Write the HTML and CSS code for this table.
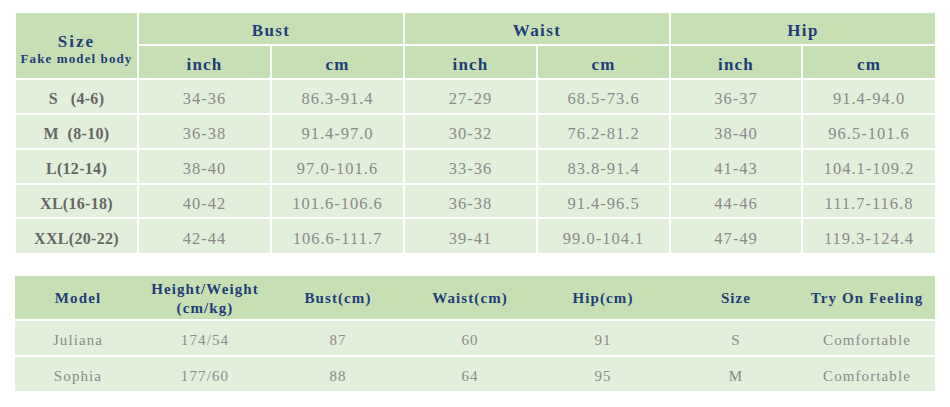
FILE: index.html
```html
<!DOCTYPE html>
<html>
<head>
<meta charset="utf-8">
<link rel="stylesheet" href="styles.css">
</head>
<body>
<div class="page">
  <table class="chart">
    <colgroup>
      <col class="c-size"><col class="c-w"><col class="c-w"><col class="c-w"><col class="c-w"><col class="c-w2"><col class="c-w2">
    </colgroup>
    <thead>
      <tr class="h1">
        <th rowspan="2" class="size-h"><div class="size-t">Size</div><div class="size-s">Fake model body</div></th>
        <th colspan="2" class="grp">Bust</th>
        <th colspan="2" class="grp">Waist</th>
        <th colspan="2" class="grp last">Hip</th>
      </tr>
      <tr class="h2">
        <th class="unit">inch</th><th class="unit">cm</th>
        <th class="unit">inch</th><th class="unit">cm</th>
        <th class="unit">inch</th><th class="unit last">cm</th>
      </tr>
    </thead>
    <tbody>
      <tr class="r35"><td class="sz">S   (4-6)</td><td>34-36</td><td>86.3-91.4</td><td>27-29</td><td>68.5-73.6</td><td>36-37</td><td class="last">91.4-94.0</td></tr>
      <tr class="r35"><td class="sz">M  (8-10)</td><td>36-38</td><td>91.4-97.0</td><td>30-32</td><td>76.2-81.2</td><td>38-40</td><td class="last">96.5-101.6</td></tr>
      <tr class="r35"><td class="sz">L(12-14)</td><td>38-40</td><td>97.0-101.6</td><td>33-36</td><td>83.8-91.4</td><td>41-43</td><td class="last">104.1-109.2</td></tr>
      <tr class="r34"><td class="sz">XL(16-18)</td><td>40-42</td><td>101.6-106.6</td><td>36-38</td><td>91.4-96.5</td><td>44-46</td><td class="last">111.7-116.8</td></tr>
      <tr class="r34 end"><td class="sz">XXL(20-22)</td><td>42-44</td><td>106.6-111.7</td><td>39-41</td><td>99.0-104.1</td><td>47-49</td><td class="last">119.3-124.4</td></tr>
    </tbody>
  </table>

  <table class="models">
    <colgroup>
      <col class="m1"><col class="m2"><col class="m3"><col class="m4"><col class="m5"><col class="m6"><col class="m7">
    </colgroup>
    <thead>
      <tr class="mh">
        <th>Model</th><th>Height/Weight<br>(cm/kg)</th><th>Bust(cm)</th><th>Waist(cm)</th><th>Hip(cm)</th><th>Size</th><th>Try On Feeling</th>
      </tr>
    </thead>
    <tbody>
      <tr class="mr1"><td>Juliana</td><td>174/54</td><td>87</td><td>60</td><td>91</td><td>S</td><td>Comfortable</td></tr>
      <tr class="mr2"><td>Sophia</td><td>177/60</td><td>88</td><td>64</td><td>95</td><td>M</td><td>Comfortable</td></tr>
    </tbody>
  </table>
</div>
</body>
</html>
```

FILE: styles.css
```css
html, body {
  margin: 0;
  padding: 0;
  background: #ffffff;
}

.page {
  padding: 13px 0 0 16px;
  font-family: "Liberation Serif", "DejaVu Serif", serif;
}

table {
  border-collapse: separate;
  border-spacing: 0;
  table-layout: fixed;
}

th, td {
  padding: 0;
  text-align: center;
  vertical-align: middle;
  white-space: pre;
}

/* ---------- size chart ---------- */
.chart {
  width: 919px;
}
.chart .c-size { width: 123px; }
.chart .c-w { width: 133px; }
.chart .c-w2 { width: 132px; }

.chart th {
  background: #c6e0b4;
  color: #1f3d78;
  font-weight: bold;
  border-right: 2px solid #ffffff;
  border-bottom: 2px solid #ffffff;
}
.chart td {
  background: #e2efda;
  color: #8a8a8a;
  font-size: 16.5px;
  letter-spacing: 1px;
  padding-top: 5px;
  border-right: 2px solid #ffffff;
  border-bottom: 2px solid #ffffff;
}
.chart .last { border-right: none; }
.chart .end td { border-bottom: none; }

.chart .h1 { height: 33px; }
.chart .h2 { height: 34px; }
.chart .r35 { height: 35px; }
.chart .r34 { height: 34px; }

.chart .grp {
  font-size: 17px;
  letter-spacing: 1.4px;
  padding-top: 4px;
}
.chart .unit {
  font-size: 17px;
  letter-spacing: 1.2px;
  padding-top: 5px;
}
.chart .size-h {
  padding-top: 7px;
}
.size-t {
  font-size: 17px;
  letter-spacing: 2px;
  line-height: 19px;
}
.size-s {
  font-size: 13px;
  letter-spacing: 1.1px;
  line-height: 16px;
}
.chart td.sz {
  color: #666666;
  font-weight: bold;
  font-size: 16px;
  letter-spacing: 0.3px;
}

/* ---------- model table ---------- */
.models {
  width: 920px;
  margin: 23px 0 0 -1px;
}
.models .m1 { width: 126px; }
.models .m2 { width: 128px; }
.models .m3 { width: 138px; }
.models .m4 { width: 126px; }
.models .m5 { width: 140px; }
.models .m6 { width: 126px; }
.models .m7 { width: 136px; }

.models th {
  background: #c6e0b4;
  color: #1f3d78;
  font-weight: bold;
  font-size: 15px;
  line-height: 19px;
  letter-spacing: 1.1px;
  border-bottom: 2px solid #ffffff;
  padding-top: 2px;
}
.models td {
  background: #e2efda;
  color: #8a8a8a;
  font-size: 15px;
  letter-spacing: 1.1px;
  padding-top: 4px;
}
.models .mh { height: 45px; }
.models .mr1 { height: 36px; }
.models .mr1 td { border-bottom: 2px solid #ffffff; }
.models .mr2 { height: 34px; }
```
